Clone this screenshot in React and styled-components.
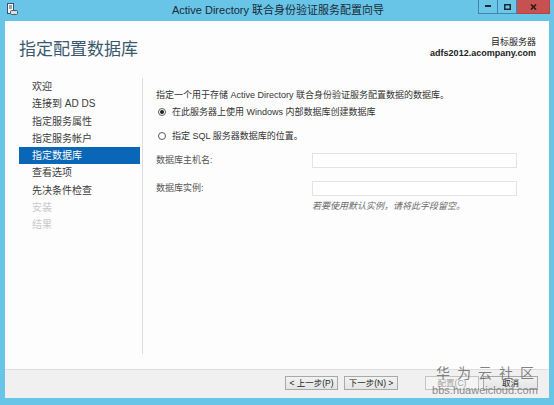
import React from "react";
import styled, { createGlobalStyle, css } from "styled-components";

const GlobalStyle = createGlobalStyle`
  html, body { margin: 0; padding: 0; }
  body {
    width: 554px;
    height: 405px;
    overflow: hidden;
    font-family: "Liberation Sans", "Noto Sans CJK SC", sans-serif;
  }
`;

const FONT = `"Liberation Sans", "Noto Sans CJK SC", sans-serif`;

const Window = styled.div`
  position: relative;
  width: 554px;
  height: 405px;
  box-sizing: border-box;
  background: #68c5e7;
  padding: 0 5px 7px 5px;
  display: flex;
  flex-direction: column;
`;

const TitleBar = styled.div`
  height: 21px;
  flex: none;
  display: flex;
  align-items: flex-start;
  margin: 0 -5px;
  padding: 0 4px 0 7px;
`;

const AppIcon = styled.svg`
  width: 11px;
  height: 12px;
  margin-top: 3px;
  flex: none;
`;

const Title = styled.div`
  flex: 1;
  text-align: center;
  font-size: 11px;
  line-height: 21px;
  color: #1b2a36;
  padding-left: 60px;
`;

const Controls = styled.div`
  display: flex;
  height: 14px;
  flex: none;
`;

const CtrlButton = styled.div`
  box-sizing: border-box;
  height: 14px;
  width: ${(p) => p.$w}px;
  display: flex;
  align-items: center;
  justify-content: center;
  border: 1px solid #3f86ad;
  border-top: none;
  ${(p) =>
    p.$close
      ? css`
          background: #c75050;
          border-color: #b34545;
        `
      : css`
          background: #6cc6e7;
        `}
  & + & { border-left: none; }
`;

const Body = styled.div`
  flex: 1;
  display: flex;
  flex-direction: column;
  background: #fdfdfd;
  min-height: 0;
`;

const Header = styled.div`
  display: flex;
  justify-content: space-between;
  align-items: flex-start;
  height: 57px;
  flex: none;
  padding: 0 13px 0 14px;
`;

const Heading = styled.h1`
  margin: 18px 0 0 0;
  font-weight: normal;
  font-size: 17px;
  line-height: 22px;
  color: #3a5870;
  font-family: ${FONT};
`;

const ServerInfo = styled.div`
  margin-top: 16px;
  text-align: right;
  font-size: 9px;
  line-height: 11px;
  color: #222;
`;

const ServerName = styled.div`
  font-weight: bold;
`;

const Main = styled.div`
  flex: 1;
  display: flex;
  padding-bottom: 15px;
  min-height: 0;
`;

const Nav = styled.ul`
  list-style: none;
  margin: 0;
  width: 136px;
  padding: 0 2px 0 14px;
  box-sizing: border-box;
  width: 138px;
  border-right: 1px solid #dcdcdc;
  flex: none;
`;

const NavItem = styled.li`
  height: 17.3px;
  line-height: 17.3px;
  padding-left: 13px;
  font-size: 10px;
  white-space: nowrap;
  color: ${(p) => (p.$disabled ? "#c9c9c9" : p.$active ? "#ffffff" : "#3c3c3c")};
  background: ${(p) => (p.$active ? "#0a66b6" : "transparent")};
`;

const Content = styled.div`
  flex: 1;
  padding: 11px 0 0 13px;
  font-size: 9px;
  color: #333;
`;

const Intro = styled.p`
  margin: 0;
  line-height: 12px;
`;

const RadioRow = styled.label`
  display: flex;
  align-items: center;
  gap: 6px;
  height: 12px;
  line-height: 12px;
  margin: ${(p) => p.$mt}px 0 0 2px;
`;

const RadioMark = styled.span`
  box-sizing: border-box;
  width: 8px;
  height: 8px;
  border-radius: 50%;
  border: 1px solid #5a5a5a;
  background: #fff;
  display: flex;
  align-items: center;
  justify-content: center;
  &::after {
    content: "";
    width: 4px;
    height: 4px;
    border-radius: 50%;
    background: ${(p) => (p.$checked ? "#222" : "transparent")};
  }
`;

const Form = styled.div`
  display: grid;
  grid-template-columns: 156px 205px;
  row-gap: 13px;
  margin-top: 11px;
  align-items: center;
`;

const FieldLabel = styled.span`
  color: #555;
  line-height: 15px;
`;

const TextBox = styled.div`
  box-sizing: border-box;
  height: 15px;
  border: 1px solid #e3e3e3;
  background: #fff;
`;

const Hint = styled.div`
  grid-column: 2;
  margin-top: -9px;
  font-style: italic;
  color: #6a6a6a;
  line-height: 12px;
`;

const Footer = styled.div`
  height: 29px;
  flex: none;
  box-sizing: border-box;
  border-top: 1px solid #dedede;
  background: #f0f0f0;
  display: flex;
  align-items: center;
  justify-content: flex-end;
  padding: 0 11px 2px 0;
`;

const Button = styled.button`
  box-sizing: border-box;
  width: ${(p) => p.$w || 54}px;
  height: 14px;
  padding: 0;
  margin-left: ${(p) => p.$gap || 0}px;
  font-family: ${FONT};
  font-size: 8.5px;
  line-height: 12px;
  border: 1px solid ${(p) => (p.disabled ? "#c4c4c4" : "#a9a9a9")};
  background: ${(p) =>
    p.disabled ? "#f4f4f4" : "linear-gradient(#f2f2f2, #e4e4e4)"};
  color: ${(p) => (p.disabled ? "#a3a3a3" : "#222")};
`;

const Watermark = styled.div`
  position: absolute;
  right: 16px;
  bottom: 9px;
  width: 106px;
  pointer-events: none;
  color: rgba(90, 90, 90, 0.75);
  font-family: ${FONT};
  text-align: center;
`;

const WatermarkTitle = styled.div`
  font-size: 14px;
  line-height: 15px;
  letter-spacing: 7px;
  margin-right: -7px;
`;

const WatermarkUrl = styled.div`
  font-size: 11px;
  line-height: 12px;
  margin-top: 3px;
  color: rgba(110, 110, 110, 0.8);
`;

const steps = [
  { label: "欢迎" },
  { label: "连接到 AD DS" },
  { label: "指定服务属性" },
  { label: "指定服务帐户" },
  { label: "指定数据库", active: true },
  { label: "查看选项" },
  { label: "先决条件检查" },
  { label: "安装", disabled: true },
  { label: "结果", disabled: true },
];

export default function App() {
  return (
    <>
      <GlobalStyle />
      <Window>
        <TitleBar>
          <AppIcon viewBox="0 0 11 12">
            <rect x="0.5" y="0.5" width="6" height="10" fill="#f4f8fb" stroke="#3b5368" strokeWidth="1" />
            <line x1="2" y1="3" x2="5" y2="3" stroke="#3b5368" strokeWidth="1" />
            <line x1="2" y1="5" x2="5" y2="5" stroke="#3b5368" strokeWidth="1" />
            <rect x="3.5" y="7.5" width="7" height="4" rx="1" fill="#d8dde2" stroke="#4b5b68" strokeWidth="1" />
          </AppIcon>
          <Title>Active Directory 联合身份验证服务配置向导</Title>
          <Controls>
            <CtrlButton $w={20}>
              <svg width="6" height="3" viewBox="0 0 6 3">
                <rect x="0" y="0" width="6" height="2" fill="#1c2a33" />
              </svg>
            </CtrlButton>
            <CtrlButton $w={19}>
              <svg width="7" height="6" viewBox="0 0 7 6">
                <rect x="0.75" y="0.75" width="5.5" height="4.5" fill="none" stroke="#1c2a33" strokeWidth="1.5" />
              </svg>
            </CtrlButton>
            <CtrlButton $w={33} $close>
              <svg width="7" height="6" viewBox="0 0 7 6">
                <path d="M1 0.5 L6 5.5 M6 0.5 L1 5.5" stroke="#2a1a1a" strokeWidth="1.6" />
              </svg>
            </CtrlButton>
          </Controls>
        </TitleBar>
        <Body>
          <Header>
            <Heading>指定配置数据库</Heading>
            <ServerInfo>
              <div>目标服务器</div>
              <ServerName>adfs2012.acompany.com</ServerName>
            </ServerInfo>
          </Header>
          <Main>
            <Nav>
              {steps.map((s) => (
                <NavItem key={s.label} $active={s.active} $disabled={s.disabled}>
                  {s.label}
                </NavItem>
              ))}
            </Nav>
            <Content>
              <Intro>指定一个用于存储 Active Directory 联合身份验证服务配置数据的数据库。</Intro>
              <RadioRow $mt={5}>
                <RadioMark $checked />
                在此服务器上使用 Windows 内部数据库创建数据库
              </RadioRow>
              <RadioRow $mt={12}>
                <RadioMark />
                指定 SQL 服务器数据库的位置。
              </RadioRow>
              <Form>
                <FieldLabel>数据库主机名:</FieldLabel>
                <TextBox />
                <FieldLabel>数据库实例:</FieldLabel>
                <TextBox />
                <Hint>若要使用默认实例，请将此字段留空。</Hint>
              </Form>
            </Content>
          </Main>
          <Footer>
            <Button $w={53}>&lt; 上一步(P)</Button>
            <Button $w={54} $gap={6}>下一步(N) &gt;</Button>
            <Button $w={54} $gap={27} disabled>配置(C)</Button>
            <Button $w={55} $gap={4}>取消</Button>
          </Footer>
        </Body>
        <Watermark>
          <WatermarkTitle>华为云社区</WatermarkTitle>
          <WatermarkUrl>bbs.huaweicloud.com</WatermarkUrl>
        </Watermark>
      </Window>
    </>
  );
}
